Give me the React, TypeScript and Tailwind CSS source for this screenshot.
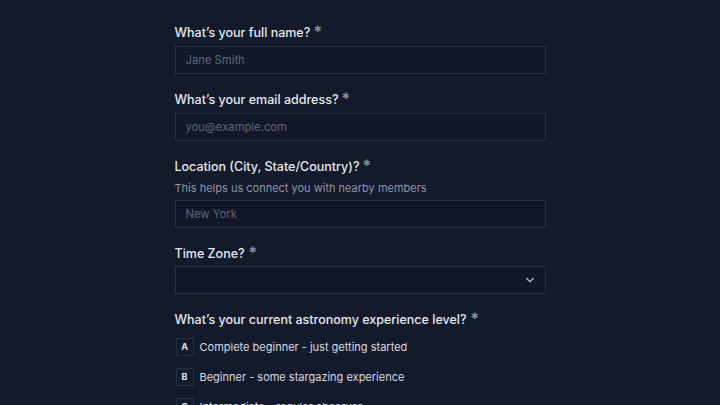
import { ChevronDown } from "lucide-react";

const options = [
  { key: "A", label: "Complete beginner - just getting started" },
  { key: "B", label: "Beginner - some stargazing experience" },
  { key: "C", label: "Intermediate - regular observer" },
];

function Label({ children }: { children: React.ReactNode }) {
  return (
    <label className="flex items-start text-[12.5px] leading-5 font-medium text-[#e6e8ef]">
      {children}
      <span className="ml-1 text-[9px] leading-3 text-[#858ca0]">✱</span>
    </label>
  );
}

function TextField({ placeholder }: { placeholder: string }) {
  return (
    <input
      placeholder={placeholder}
      className="mt-[3px] h-7 w-full border border-[#262e45] bg-[#121829] px-2.5 text-[11.25px] text-[#e6e8ef] placeholder:text-[#5f667a] outline-none"
    />
  );
}

export default function App() {
  return (
    <div
      className="min-h-screen w-full bg-[#131a2b] pt-[23px]"
      style={{ fontFamily: "Inter, 'Noto Sans', sans-serif" }}
    >
      <div className="mx-auto flex w-[371px] flex-col gap-4">
        <div>
          <Label>What’s your full name?</Label>
          <TextField placeholder="Jane Smith" />
        </div>

        <div>
          <Label>What’s your email address?</Label>
          <TextField placeholder="you@example.com" />
        </div>

        <div>
          <Label>Location (City, State/Country)?</Label>
          <p className="mt-0.5 text-[11px] leading-[18px] text-[#8f96a8]">
            This helps us connect you with nearby members
          </p>
          <TextField placeholder="New York" />
        </div>

        <div>
          <Label>Time Zone?</Label>
          <div className="mt-[2px] flex h-7 w-full items-center justify-end border border-[#262e45] bg-[#121829] pr-2">
            <ChevronDown className="h-3.5 w-3.5 text-[#b8bdcb]" strokeWidth={2} />
          </div>
        </div>

        <div>
          <Label>What’s your current astronomy experience level?</Label>
          <div className="mt-2 flex flex-col gap-3">
            {options.map((o) => (
              <div key={o.key} className="flex items-center gap-1.5 pl-px">
                <span className="flex h-[18px] w-[18px] items-center justify-center border border-[#262e45] text-[9px] font-bold text-[#e6e8ef]">
                  {o.key}
                </span>
                <span className="text-[11px] text-[#d7dae3]">{o.label}</span>
              </div>
            ))}
          </div>
        </div>
      </div>
    </div>
  );
}
